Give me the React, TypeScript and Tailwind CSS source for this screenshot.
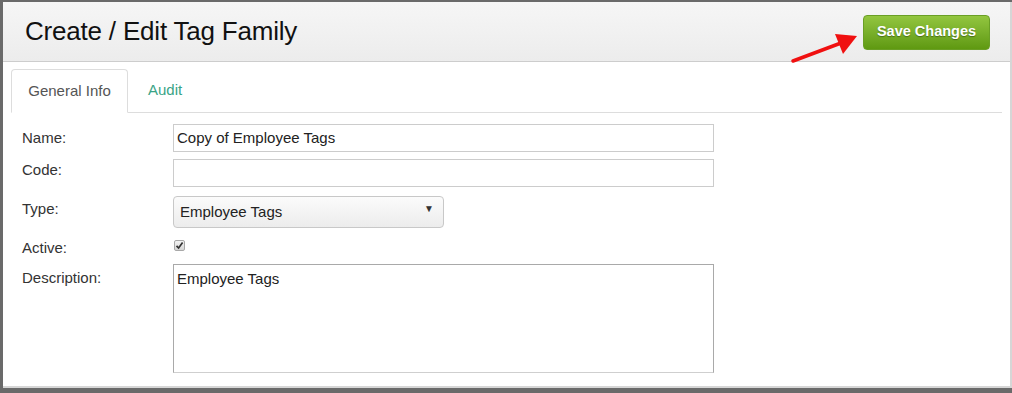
import React from 'react';

const font = { fontFamily: '"Liberation Sans", Arial, Helvetica, sans-serif' };

function Arrow() {
  return (
    <svg className="absolute left-[786px] top-[30px]" width="72" height="34" viewBox="0 0 72 34">
      <line x1="4" y1="29" x2="52" y2="11" stroke="#f01010" strokeWidth="3.5" strokeLinecap="round" />
      <polygon points="68,4 46,2 54,22" fill="#f01010" />
    </svg>
  );
}

export default function App() {
  return (
    <div className="w-[1012px] h-[393px] bg-[#6a6a6a] pl-[3px] pt-[2px] pb-[5px] overflow-hidden" style={font}>
      <div className="relative h-full bg-white border-r-2 border-b-2 border-[#d6d6d6] flex flex-col">
        {/* Header */}
        <div className="h-[60px] shrink-0 flex items-center justify-between pl-[22px] pr-[20px] bg-gradient-to-b from-[#f6f6f6] to-[#ececec] border-b border-[#cdcdcd]">
          <h1 className="text-[26px] text-[#111] tracking-[-0.2px]">Create / Edit Tag Family</h1>
          <button className="h-[35px] w-[127px] mt-[1px] rounded-[4px] border border-[#6a9f25] bg-gradient-to-b from-[#93c63f] to-[#5f9910] text-white font-bold text-[14.5px] [text-shadow:0_1px_1px_rgba(0,0,0,0.35)]">
            Save Changes
          </button>
        </div>
        <Arrow />

        {/* Tabs */}
        <div className="mt-[7px] mx-[8px] flex items-end border-b border-[#dddddd] h-[44px]">
          <div className="h-[44px] w-[117px] -mb-px flex items-center justify-center border border-[#dddddd] border-b-white rounded-t-[4px] bg-white text-[15px] text-[#555]">
            General Info
          </div>
          <div className="h-[44px] flex items-center pl-[20px] text-[15px] text-[#3aa486]">Audit</div>
        </div>

        {/* Form */}
        <div className="pl-[19px] pt-[11px] text-[15px] text-[#333] flex flex-col">
          <div className="flex items-start h-[35px]">
            <label className="w-[151px] pt-[3px]">Name:</label>
            <div className="w-[541px] h-[28px] border border-[#cccccc] flex items-center px-[3px] text-[#222]">Copy of Employee Tags</div>
          </div>
          <div className="flex items-start h-[37px]">
            <label className="w-[151px]">Code:</label>
            <div className="w-[541px] h-[28px] border border-[#cccccc]" />
          </div>
          <div className="flex items-start h-[40px]">
            <label className="w-[151px] pt-[2px]">Type:</label>
            <div className="relative w-[271px] h-[32px] rounded-[4px] border border-[#c8c8c8] bg-gradient-to-b from-[#fbfbfb] to-[#ececec] flex items-center pl-[6px] text-[#222]">
              Employee Tags
              <span className="absolute right-[9px] top-[4px] text-[10px] text-[#333]">▼</span>
            </div>
          </div>
          <div className="flex items-start h-[28px]">
            <label className="w-[151px] pt-[1px]">Active:</label>
            <div className="mt-[4px] ml-[1px] w-[11px] h-[11px] rounded-[2px] border border-[#a8a8a8] bg-gradient-to-b from-[#f4f4f4] to-[#d6d6d6] flex items-center justify-center">
              <svg width="9" height="9" viewBox="0 0 9 9">
                <path d="M1.5 4.8 L3.6 7 L7.6 1.6" stroke="#333" strokeWidth="1.7" fill="none" />
              </svg>
            </div>
          </div>
          <div className="flex items-start">
            <label className="w-[151px] pt-[3px]">Description:</label>
            <div className="w-[541px] h-[109px] border border-[#a9a9a9] border-b-[#cfcfcf] px-[3px] pt-[3px] text-[#222]">Employee Tags</div>
          </div>
        </div>
      </div>
    </div>
  );
}
